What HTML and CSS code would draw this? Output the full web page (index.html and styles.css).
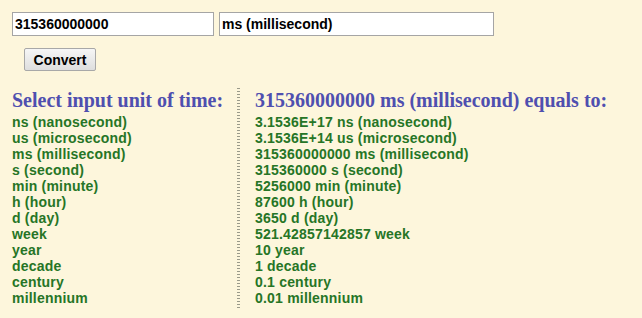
FILE: index.html
```html
<!DOCTYPE HTML>
<html lang="en">
<head>
    <meta charset="UTF-8">
    <title>Time unit converter</title>
    <link rel="stylesheet" href="styles.css">
</head>
<body>
    <div class="box">
        <form class="entry">
            <div class="fields">
                <input type="text" class="value" name="value" value="315360000000">
                <input type="text" class="unit" name="unit" value="ms (millisecond)">
            </div>
            <input type="button" class="convert" value="Convert">
        </form>
        <div class="result">
            <div class="col">
                <h3>Select input unit of time:</h3>
                <ul>
                    <li>ns (nanosecond)</li>
                    <li>us (microsecond)</li>
                    <li>ms (millisecond)</li>
                    <li>s (second)</li>
                    <li>min (minute)</li>
                    <li>h (hour)</li>
                    <li>d (day)</li>
                    <li>week</li>
                    <li>year</li>
                    <li>decade</li>
                    <li>century</li>
                    <li>millennium</li>
                </ul>
            </div>
            <div class="divider"></div>
            <div class="col">
                <h3>315360000000 ms (millisecond) equals to:</h3>
                <ul>
                    <li>3.1536E+17 ns (nanosecond)</li>
                    <li>3.1536E+14 us (microsecond)</li>
                    <li>315360000000 ms (millisecond)</li>
                    <li>315360000 s (second)</li>
                    <li>5256000 min (minute)</li>
                    <li>87600 h (hour)</li>
                    <li>3650 d (day)</li>
                    <li>521.42857142857 week</li>
                    <li>10 year</li>
                    <li>1 decade</li>
                    <li>0.1 century</li>
                    <li>0.01 millennium</li>
                </ul>
            </div>
        </div>
    </div>
</body>
</html>
```
FILE: styles.css
```css
html,body{background-color:#fdf6dc;}
body{margin:0;font-family:"Liberation Sans",Arial,sans-serif;}
h3,ul,li{margin:0;padding:0;list-style:none;}

.box{
    padding:12px 0 0 12px;
}
.entry .fields{
    display:flex;
    gap:5px;
}
.entry input{
    font-family:"Liberation Sans",Arial,sans-serif;
    font-weight:bold;
    font-size:14px;
    color:#000;
    outline:none;
}
.entry .value,
.entry .unit{
    box-sizing:border-box;
    height:24px;
    padding:0 2px;
    border:1px solid #a5a5a5;
    background-color:#fff;
}
.entry .value{width:202px;}
.entry .unit{width:275px;}
.entry .convert{
    display:block;
    box-sizing:border-box;
    width:72px;
    height:23px;
    margin:12px 0 0 12px;
    padding:0;
    border:1px solid #a8a8a8;
    border-radius:2px;
    background:linear-gradient(#f6f6f6,#dedede);
    cursor:pointer;
}

.result{
    display:flex;
    margin-top:17px;
}
.result .col:first-child{width:225px;}
.result .divider{
    width:3px;
    height:220px;
    margin-right:15px;
    background:repeating-linear-gradient(to bottom,#9a9a8a 0,#9a9a8a 1px,transparent 1px,transparent 3px);
}
.result h3{
    height:26px;
    color:#4f4faf;
    font-family:"Liberation Serif","Times New Roman",serif;
    font-size:20px;
    line-height:24px;
}
.result li{
    color:#267526;
    font-size:14px;
    font-weight:bold;
    letter-spacing:0.2px;
    line-height:16px;
}
```
